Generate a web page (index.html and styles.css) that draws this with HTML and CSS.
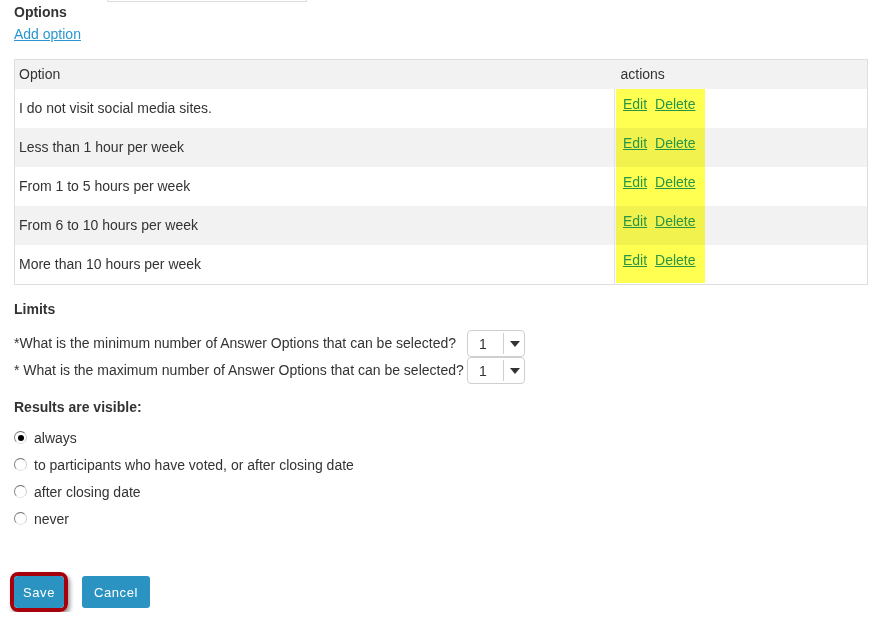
FILE: index.html
```
<!DOCTYPE html>
<html>
<head>
<meta charset="utf-8">
<link rel="stylesheet" href="styles.css">
</head>
<body>
<div class="page">
  <div class="topfield"></div>
  <div class="heading">Options</div>
  <div class="addline"><a class="link" href="#">Add option</a></div>

  <div class="table-wrap">
    <table class="opts">
      <thead>
        <tr><th class="c-opt">Option</th><th class="c-act">actions</th></tr>
      </thead>
      <tbody>
        <tr><td class="c-opt">I do not visit social media sites.</td><td class="c-act"><a class="link" href="#">Edit</a> <a class="link" href="#">Delete</a></td></tr>
        <tr class="alt"><td class="c-opt">Less than 1 hour per week</td><td class="c-act"><a class="link" href="#">Edit</a> <a class="link" href="#">Delete</a></td></tr>
        <tr><td class="c-opt">From 1 to 5 hours per week</td><td class="c-act"><a class="link" href="#">Edit</a> <a class="link" href="#">Delete</a></td></tr>
        <tr class="alt"><td class="c-opt">From 6 to 10 hours per week</td><td class="c-act"><a class="link" href="#">Edit</a> <a class="link" href="#">Delete</a></td></tr>
        <tr><td class="c-opt">More than 10 hours per week</td><td class="c-act"><a class="link" href="#">Edit</a> <a class="link" href="#">Delete</a></td></tr>
      </tbody>
    </table>
    <div class="highlight"></div>
  </div>

  <div class="heading limits">Limits</div>
  <div class="limit-grid">
    <div class="lbl">*What is the minimum number of Answer Options that can be selected?</div>
    <div class="sel"><span class="val">1</span><span class="arrow"></span></div>
    <div class="lbl">* What is the maximum number of Answer Options that can be selected?</div>
    <div class="sel"><span class="val">1</span><span class="arrow"></span></div>
  </div>

  <div class="heading results">Results are visible:</div>
  <div class="radios">
    <div class="radio-row"><span class="radio checked"></span><span>always</span></div>
    <div class="radio-row"><span class="radio"></span><span>to participants who have voted, or after closing date</span></div>
    <div class="radio-row"><span class="radio"></span><span>after closing date</span></div>
    <div class="radio-row"><span class="radio"></span><span>never</span></div>
  </div>

  <div class="buttons">
    <div class="ring"><button class="btn save">Save</button></div>
    <button class="btn cancel">Cancel</button>
  </div>
</div>
</body>
</html>
```

FILE: styles.css
```
html, body {
  margin: 0;
  padding: 0;
  background: #fff;
}
body {
  font-family: "Liberation Sans", Arial, sans-serif;
  font-size: 14px;
  color: #333;
}
.page {
  padding-left: 14px;
  width: 855px;
}
.topfield {
  margin-left: 93px;
  width: 198px;
  height: 1px;
  border: 1px solid #dcdcdc;
  border-top: none;
}
.heading {
  font-weight: bold;
  line-height: 20px;
}
.addline {
  margin-top: 2px;
  line-height: 20px;
}
.link {
  color: #2a96d0;
  text-decoration: underline;
}
.table-wrap {
  position: relative;
  margin-top: 15px;
}
.opts {
  width: 854px;
  border-collapse: collapse;
  border: 1px solid #dedede;
}
.opts th {
  background: #f2f2f2;
  font-weight: normal;
  text-align: left;
  height: 29px;
  padding: 0 4px;
  line-height: 29px;
}
.opts td {
  height: 39px;
  padding: 0 4px;
  line-height: 19px;
  vertical-align: middle;
}
.opts tr.alt td {
  background: #f2f2f2;
}
.opts th.c-opt, .opts td.c-opt {
  width: 591px;
}
.opts td.c-act {
  border-left: 1px solid #e3e3e3;
  vertical-align: top;
  padding: 5px 0 0 8px;
  height: 34px;
  line-height: 20px;
  word-spacing: 4px;
}
.opts th.c-act {
  padding-left: 6px;
}
.highlight {
  position: absolute;
  left: 602px;
  top: 30px;
  width: 89px;
  height: 194px;
  background: #ffff52;
  mix-blend-mode: multiply;
  pointer-events: none;
}
.limits {
  margin-top: 14px;
}
.limit-grid {
  margin-top: 11px;
  display: grid;
  grid-template-columns: 453px 58px;
  grid-auto-rows: 27px;
  align-items: center;
  justify-content: start;
}
.lbl {
  line-height: 20px;
  white-space: nowrap;
  margin-top: -2px;
}
.sel {
  box-sizing: border-box;
  width: 58px;
  height: 27px;
  border: 1px solid #cfcfcf;
  border-radius: 4px;
  display: flex;
  align-items: center;
  background: #fff;
}
.val {
  width: 36px;
  padding-left: 11px;
  box-sizing: border-box;
  height: 21px;
  line-height: 22px;
  border-right: 1px solid #cfcfcf;
  flex: none;
}
.arrow {
  margin-left: 6px;
  width: 0;
  height: 0;
  border-left: 5px solid transparent;
  border-right: 5px solid transparent;
  border-top: 6px solid #333;
}
.results {
  margin-top: 13px;
}
.radios {
  margin-top: 7px;
}
.radio-row {
  display: flex;
  align-items: center;
  height: 27px;
  gap: 7px;
}
.radio {
  box-sizing: border-box;
  width: 13px;
  height: 13px;
  border-radius: 50%;
  border: 1px solid;
  border-color: #6f6f6f #cfcfcf #e2e2e2 #7f7f7f;
  background: #fff;
  position: relative;
  flex: none;
}
.radio.checked::after {
  content: "";
  position: absolute;
  left: 2.5px;
  top: 2.5px;
  width: 6px;
  height: 6px;
  border-radius: 50%;
  background: #000;
}
.buttons {
  margin-top: 40px;
  display: flex;
  align-items: center;
  gap: 14px;
  margin-left: -4px;
}
.ring {
  border: 4px solid #a6000c;
  border-radius: 8px;
  box-shadow: 2px 3px 4px rgba(0, 0, 0, 0.4);
  display: flex;
  overflow: hidden;
}
.btn {
  font-family: "Liberation Sans", Arial, sans-serif;
  font-size: 13px;
  letter-spacing: 0.6px;
  color: #fff;
  background: #2b93c2;
  border: none;
  margin: 0;
  cursor: pointer;
}
.save {
  width: 50px;
  height: 32px;
  border-radius: 3px;
  padding: 0;
}
.cancel {
  width: 68px;
  height: 32px;
  border-radius: 3px;
  padding: 0;
}
```
